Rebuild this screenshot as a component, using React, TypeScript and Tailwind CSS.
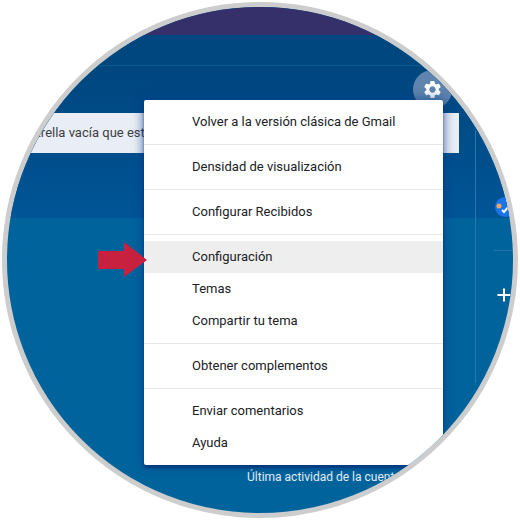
import { Plus } from "lucide-react";
import { MdSettings } from "react-icons/md";

const sections = [
  ["Volver a la versión clásica de Gmail"],
  ["Densidad de visualización"],
  ["Configurar Recibidos"],
  ["Configuración", "Temas", "Compartir tu tema"],
  ["Obtener complementos"],
  ["Enviar comentarios", "Ayuda"],
];

export default function App() {
  return (
    <div className="w-[520px] h-[520px] bg-white p-[2px] font-['Roboto',sans-serif]">
      <div className="relative w-[516px] h-[516px] rounded-full border-[5px] border-[#cdcdcd] overflow-hidden bg-[#00639c]">
        {/* Wallpaper bands */}
        <div className="h-[28px] bg-[#352f6a]" />
        <div className="h-[31px] bg-[#00467f] border-b border-[#0a5c8f]" />
        <div className="h-[152px] pt-[47px] bg-gradient-to-b from-[#00467f] to-[#005596]">
          {/* Search bar */}
          <div className="w-[452px] h-[40px] pl-[16px] bg-[#e9edf5] flex items-center text-[13px] text-[#3c4043] whitespace-nowrap">
            estrella vacía que esté
          </div>
        </div>
        <div className="pt-[252px] pl-[240px] text-[12px] leading-[14px] text-[#e6eef5] whitespace-nowrap">
          Última actividad de la cuenta
        </div>

        {/* Side panel lines */}
        <div className="absolute left-[468px] top-[123px] w-px h-[253px] bg-[#2b76ad]" />
        <div className="absolute left-[487px] top-[243px] w-[30px] h-px bg-[#2b76ad]" />

        {/* Settings button */}
        <div className="absolute left-[406px] top-[63px] w-[39px] h-[39px] rounded-full bg-[#5f84ad] flex items-center justify-center">
          <MdSettings className="w-[21px] h-[21px] text-white" />
        </div>

        {/* Side icons */}
        <div className="absolute left-[488px] top-[190px] w-[20px] h-[20px] rounded-full bg-[#1a73e8]">
          <svg width="20" height="20" viewBox="0 0 20 20">
            <circle cx="4" cy="9" r="2.5" fill="#f2a65a" />
            <path d="M7 13L9 15L15 8" fill="none" stroke="#ffffff" strokeWidth="2" />
          </svg>
        </div>
        <Plus className="absolute left-[487px] top-[278px] w-[20px] h-[20px] text-white" strokeWidth={2.4} />

        {/* Dropdown menu */}
        <div className="absolute left-[137px] top-[93px] w-[299px] bg-white rounded-[2px] shadow-[0_3px_3px_rgba(0,30,100,0.5),0_0_8px_3px_rgba(0,60,140,0.45)] divide-y divide-[#e8e8e8]">
          {sections.map((items) => (
            <div key={items[0]} className="py-[6px]">
              {items.map((item) => (
                <div
                  key={item}
                  className={
                    item === "Configuración"
                      ? "h-[32px] pl-[48px] flex items-center text-[13px] text-[#202124] bg-[#eeeeee]"
                      : "h-[32px] pl-[48px] flex items-center text-[13px] text-[#202124]"
                  }
                >
                  {item}
                </div>
              ))}
            </div>
          ))}
        </div>

        {/* Red arrow */}
        <svg className="absolute left-[90px] top-[235px]" width="52" height="37" viewBox="0 0 52 37">
          <path d="M1 9H27V0L50 18L27 35V27H1Z" fill="#c8203f" />
        </svg>
      </div>
    </div>
  );
}
